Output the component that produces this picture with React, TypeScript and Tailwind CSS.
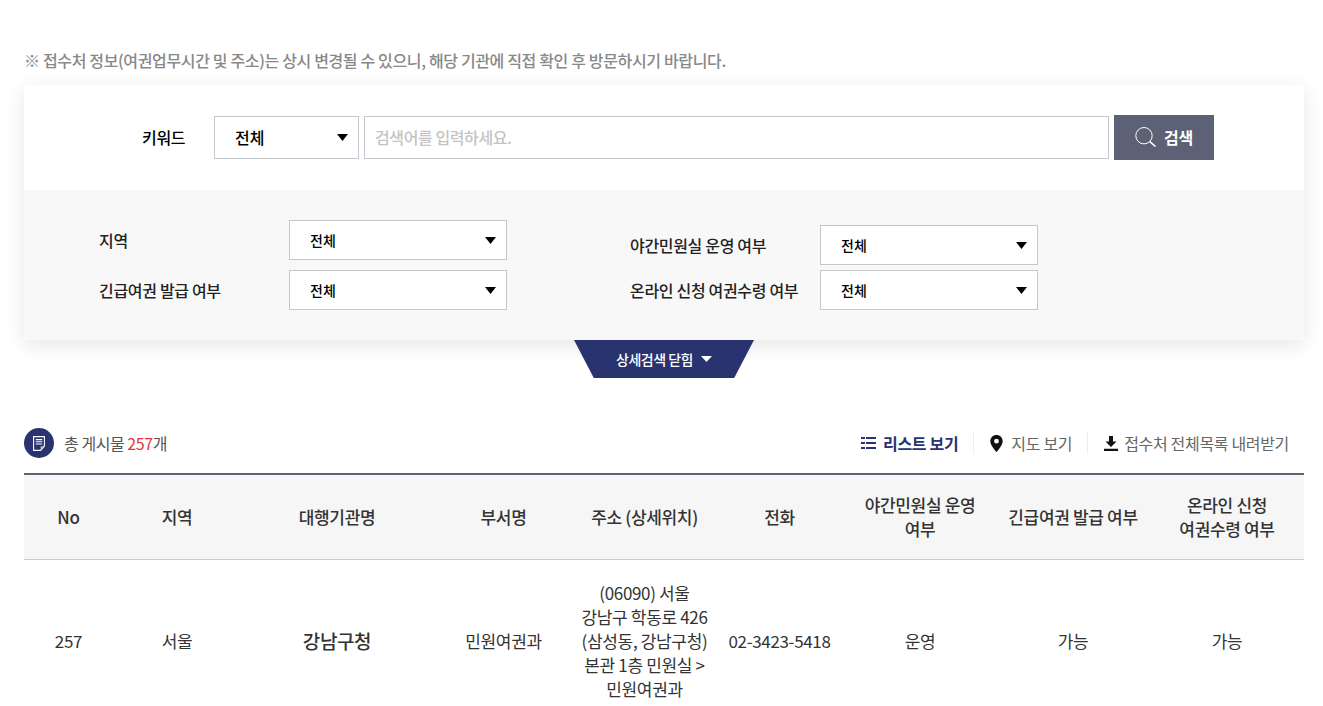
import React from 'react';

const Arrow = () => (
  <svg width="11" height="8" viewBox="0 0 11 8" className="shrink-0">
    <path d="M0 1h11L5.5 8z" fill="#000" />
  </svg>
);

const Select = ({ className, text = 'text-sm' }: { className: string; text?: string }) => (
  <div className={`flex items-center justify-between bg-white border border-[#c4c8cc] pl-5 pr-[10px] font-medium text-black ${text} ${className}`}>
    <span>전체</span>
    <Arrow />
  </div>
);

const Label = ({ children, className = '' }: { children: React.ReactNode; className?: string }) => (
  <div className={`text-[16px] font-medium text-[#222] tracking-[-0.32px] ${className}`}>{children}</div>
);

const columns = [89, 128, 192, 141, 141, 129, 152, 154, 154];

const headers = [
  'No',
  '지역',
  '대행기관명',
  '부서명',
  '주소 (상세위치)',
  '전화',
  <>야간민원실 운영<br />여부</>,
  '긴급여권 발급 여부',
  <>온라인 신청<br />여권수령 여부</>,
];

export default function App() {
  return (
    <div className="h-[706px] overflow-hidden bg-white pr-[19px] pl-[24px] text-[#333] font-['Noto_Sans_CJK_KR','Noto_Sans',sans-serif]">
      <p className="pt-[48px] h-[85px] text-[16px] leading-[24px] tracking-[-0.35px] text-[#888] font-medium whitespace-nowrap">
        ※ 접수처 정보(여권업무시간 및 주소)는 상시 변경될 수 있으니, 해당 기관에 직접 확인 후 방문하시기 바랍니다.
      </p>

      <div className="shadow-[0_5px_20px_rgba(0,0,0,0.1)]">
        <div className="h-[105px] bg-white flex items-center pl-[118px] pb-[1px]">
          <Label className="w-[72px] font-bold text-black">키워드</Label>
          <Select className="w-[145px] h-[43px]" text="text-[16px]" />
          <div className="ml-[5px] w-[745px] h-[43px] border border-[#c4c8cc] flex items-center pl-[10px] text-[16px] font-medium text-[#c4c4c4] tracking-[-0.4px]">
            검색어를 입력하세요.
          </div>
          <button className="ml-[5px] w-[100px] h-[45px] bg-[#5c6175] text-white flex items-center justify-center gap-[8px] text-[16px] font-bold tracking-[-0.32px]">
            <svg width="21" height="20" viewBox="0 0 21 20" fill="none" stroke="#fff" strokeWidth="1">
              <circle cx="9" cy="8.7" r="8.2" />
              <path d="M14.8 14.6L20.5 19.6" strokeWidth="1.4" />
            </svg>
            검색
          </button>
        </div>

        <div className="h-[150px] bg-[#f8f8f8] pl-[75px] pt-[30px] flex">
          <div className="w-[531px] flex flex-col gap-[10px]">
            <div className="flex items-center">
              <Label className="w-[190px]">지역</Label>
              <Select className="w-[218px] h-[40px]" />
            </div>
            <div className="flex items-center">
              <Label className="w-[190px]">긴급여권 발급 여부</Label>
              <Select className="w-[218px] h-[40px]" />
            </div>
          </div>
          <div className="flex flex-col gap-[5px] pt-[5px]">
            <div className="flex items-center">
              <Label className="w-[190px]">야간민원실 운영 여부</Label>
              <Select className="w-[218px] h-[40px]" />
            </div>
            <div className="flex items-center">
              <Label className="w-[190px]">온라인 신청 여권수령 여부</Label>
              <Select className="w-[218px] h-[40px]" />
            </div>
          </div>
        </div>
      </div>

      <div className="flex justify-center">
        <div className="w-[180px] h-[38px] bg-[#29336f] [clip-path:polygon(0_0,100%_0,89%_100%,11%_100%)] flex items-center justify-center gap-[8px] text-white text-[14px] font-medium tracking-[-0.5px]">
          상세검색 닫힘
          <svg width="11" height="6" viewBox="0 0 11 6"><path d="M0 0h11L5.5 6z" fill="#fff" /></svg>
        </div>
      </div>

      <div className="h-[95px] flex items-center justify-between pt-[35px] text-[16px] tracking-[-0.33px]">
        <div className="flex items-center gap-[10px]">
          <div className="w-[30px] h-[30px] rounded-full bg-[#29336f] flex items-center justify-center">
            <svg width="12" height="15" viewBox="0 0 12 15" fill="none" stroke="#fff" strokeWidth="1.1">
              <path d="M.6 .6h10.8v9.6L7.6 14.4H.6z" />
              <path d="M2.8 3.6h6.4M2.8 5.8h6.4M2.8 8h6.4" />
              <path d="M7.6 14.4v-4.2h3.8z" fill="#b9bcd0" stroke="none" />
            </svg>
          </div>
          <span className="text-[#555] tracking-[-0.45px]">총 게시물 <span className="text-[#e8343c]">257</span>개</span>
        </div>
        <div className="flex items-center pr-[15px] text-[#666]">
          <div className="flex items-center gap-[7px] font-bold text-[#29336f] pr-[15px] border-r border-[#eee] h-[22px]">
            <svg width="15" height="12" viewBox="0 0 15 12" fill="#29336f">
              <path d="M0 0h4v2H0zM5 0h10v2H5zM0 5h4v2H0zM5 5h10v2H5zM0 10h4v2H0zM5 10h10v2H5z" />
            </svg>
            리스트 보기
          </div>
          <div className="flex items-center gap-[8px] pl-[16px] pr-[15px] border-r border-[#eee] h-[22px]">
            <svg width="13" height="17" viewBox="0 0 13 17">
              <path fillRule="evenodd" d="M6.5 0C3 0 .3 2.7.3 6.2c0 4.2 6.2 10.8 6.2 10.8s6.2-6.6 6.2-10.8C12.7 2.7 10 0 6.5 0zm0 8.6a2.4 2.4 0 1 1 0-4.8 2.4 2.4 0 0 1 0 4.8z" fill="#111" />
            </svg>
            지도 보기
          </div>
          <div className="flex items-center gap-[6px] pl-[16px] h-[22px]">
            <svg width="14" height="15" viewBox="0 0 14 15" fill="#111">
              <path d="M5 0h4v5.5h3.5L7 11 1.5 5.5H5zM0 12.8h14V15H0z" />
            </svg>
            접수처 전체목록 내려받기
          </div>
        </div>
      </div>

      <table className="w-[1280px] table-fixed border-collapse border-t-2 border-[#5c6175]">
        <colgroup>
          {columns.map((w, i) => <col key={i} style={{ width: w }} />)}
        </colgroup>
        <thead>
          <tr className="h-[85px] bg-[#f6f6f6] border-b border-[#ccc]">
            {headers.map((h, i) => (
              <th key={i} className="font-medium text-[17px] leading-[24px] text-[#333] tracking-[-0.34px]">{h}</th>
            ))}
          </tr>
        </thead>
        <tbody>
          <tr className="text-center text-[17px] leading-[24px] tracking-[-0.34px]">
            <td>257</td>
            <td>서울</td>
            <td className="font-medium text-[19px] tracking-[-0.38px]">강남구청</td>
            <td>민원여권과</td>
            <td className="pt-[21px] pb-[21px]">(06090) 서울<br />강남구 학동로 426<br />(삼성동, 강남구청)<br />본관 1층 민원실 &gt;<br />민원여권과</td>
            <td>02-3423-5418</td>
            <td>운영</td>
            <td>가능</td>
            <td>가능</td>
          </tr>
        </tbody>
      </table>
    </div>
  );
}
